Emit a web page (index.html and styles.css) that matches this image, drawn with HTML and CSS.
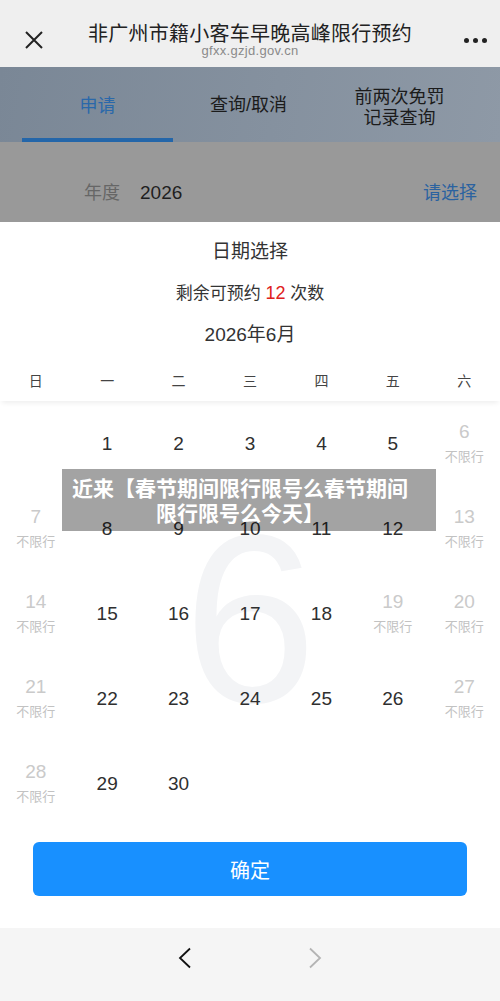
FILE: index.html
```html
<!DOCTYPE html>
<html lang="zh-CN">
<head>
<meta charset="utf-8">
<title>非广州市籍小客车早晚高峰限行预约</title>
<link rel="stylesheet" href="styles.css">
</head>
<body>
<div class="page">
  <header class="topbar">
    <div class="close">
      <svg width="18" height="18" viewBox="0 0 18 18"><path d="M1 1L17 17M17 1L1 17" stroke="#222" stroke-width="2" fill="none"/></svg>
    </div>
    <div class="title-block">
      <div class="title">非广州市籍小客车早晚高峰限行预约</div>
      <div class="subtitle">gfxx.gzjd.gov.cn</div>
    </div>
    <div class="more"><span></span><span></span><span></span></div>
  </header>

  <main class="content">
    <nav class="tabs">
      <div class="tab active">申请</div>
      <div class="tab">查询/取消</div>
      <div class="tab two">前两次免罚<br>记录查询</div>
    </nav>
    <div class="year-row">
      <span class="label">年度</span>
      <span class="value">2026</span>
      <span class="pick">请选择</span>
    </div>

    <section class="sheet">
      <div class="sheet-title">日期选择</div>
      <div class="remain">剩余可预约 <em>12</em> 次数</div>
      <div class="month">2026年6月</div>
      <div class="weekdays">
        <span>日</span><span>一</span><span>二</span><span>三</span><span>四</span><span>五</span><span>六</span>
      </div>
      <div class="cal">
        <div class="watermark">6</div>
        <div class="grid">
          <div class="day"></div>
          <div class="day">1</div>
          <div class="day">2</div>
          <div class="day">3</div>
          <div class="day">4</div>
          <div class="day">5</div>
          <div class="day off"><b>6</b><i>不限行</i></div>
          <div class="day off"><b>7</b><i>不限行</i></div>
          <div class="day">8</div>
          <div class="day">9</div>
          <div class="day">10</div>
          <div class="day">11</div>
          <div class="day">12</div>
          <div class="day off"><b>13</b><i>不限行</i></div>
          <div class="day off"><b>14</b><i>不限行</i></div>
          <div class="day">15</div>
          <div class="day">16</div>
          <div class="day">17</div>
          <div class="day">18</div>
          <div class="day off"><b>19</b><i>不限行</i></div>
          <div class="day off"><b>20</b><i>不限行</i></div>
          <div class="day off"><b>21</b><i>不限行</i></div>
          <div class="day">22</div>
          <div class="day">23</div>
          <div class="day">24</div>
          <div class="day">25</div>
          <div class="day">26</div>
          <div class="day off"><b>27</b><i>不限行</i></div>
          <div class="day off"><b>28</b><i>不限行</i></div>
          <div class="day">29</div>
          <div class="day">30</div>
        </div>
      </div>
      <div class="btn-wrap"><button class="confirm">确定</button></div>
    </section>

    <div class="banner">近来【春节期间限行限号么春节期间限行限号么今天】</div>
  </main>

  <footer class="browser-nav">
    <svg class="nav-back" width="16" height="22" viewBox="0 0 16 22"><path d="M13 1.5L3 11L13 20.5" stroke="#111" stroke-width="1.8" fill="none"/></svg>
    <svg class="nav-fwd" width="16" height="22" viewBox="0 0 16 22"><path d="M3 1.5L13 11L3 20.5" stroke="#b4b4b4" stroke-width="1.8" fill="none"/></svg>
  </footer>
</div>
</body>
</html>
```

FILE: styles.css
```css
* { box-sizing: border-box; margin: 0; padding: 0; }
html, body { width: 500px; height: 1001px; overflow: hidden; }
body {
  font-family: "Liberation Sans", "Noto Sans CJK SC", sans-serif;
  color: #333;
  background: #fff;
}
.page { display: flex; flex-direction: column; height: 1001px; }

/* header */
.topbar {
  height: 67px;
  background: #efefef;
  display: grid;
  grid-template-columns: 70px 1fr 70px;
  align-items: center;
}
.close { display: flex; justify-content: center; padding-top: 12px; margin-left: -1px; }
.close svg { margin-right: 2px; }
.title-block { align-self: start; text-align: center; padding-top: 22px; }
.title { font-size: 20px; line-height: 24px; color: #222; letter-spacing: 0.25px; }
.subtitle { font-size: 13px; line-height: 16px; color: #8a8a8a; letter-spacing: 0.3px; margin-top: -3px; }
.more { display: flex; gap: 4px; justify-content: center; padding-top: 14px; padding-left: 20px; }
.more span { width: 5px; height: 5px; border-radius: 50%; background: #222; }

/* content */
.content { flex: 1; display: flex; flex-direction: column; position: relative; }
.tabs {
  height: 75px;
  display: grid;
  grid-template-columns: repeat(3, 1fr);
  padding: 0 25px 0 22px;
  background: linear-gradient(100deg, #7a8796 0%, #85919f 55%, #8e99a6 100%);
}
.tab {
  display: flex; align-items: center; justify-content: center;
  font-size: 18px; line-height: 21px; color: #1b1b1b; text-align: center;
  padding-top: 2px;
}
.tab.active { color: #2a68aa; border-bottom: 4px solid #2466a9; padding-top: 8px; }
.tab.two { padding-top: 6px; }

.year-row {
  height: 80px;
  background: #999;
  display: flex;
  align-items: flex-start;
  padding: 39px 23px 0 84px;
  font-size: 18px;
  line-height: 24px;
}
.year-row .label { color: #666; }
.year-row .value { color: #1f1f1f; margin-left: 20px; font-size: 19px; }
.year-row .pick { color: #2b62a0; margin-left: auto; }

/* sheet */
.sheet {
  flex: 1;
  background: #fff;
  border-radius: 16px 16px 0 0;
  display: flex;
  flex-direction: column;
}
.sheet-title { text-align: center; font-size: 19px; line-height: 24px; margin-top: 18px; color: #333; }
.remain { text-align: center; font-size: 17px; line-height: 22px; margin-top: 18px; color: #333; }
.remain em { font-style: normal; color: #e02020; font-size: 18px; }
.month { text-align: center; font-size: 19px; line-height: 22px; margin-top: 19px; color: #333; }
.weekdays {
  display: grid; grid-template-columns: repeat(7, 1fr);
  height: 55px; padding-top: 25px;
  font-size: 14px; line-height: 20px; color: #444; text-align: center;
  box-shadow: 0 4px 5px -2px rgba(0,0,0,0.07);
  position: relative; z-index: 1;
}

.cal { position: relative; }
.watermark {
  position: absolute; inset: 0;
  display: flex; align-items: center; justify-content: center;
  font-family: "Liberation Sans", sans-serif;
  font-size: 240px; line-height: 1; color: #f3f4f6;
  padding-top: 10px;
}
.grid { position: relative; display: grid; grid-template-columns: repeat(7, 1fr); grid-auto-rows: 85px; }
.day {
  display: flex; flex-direction: column; align-items: center; justify-content: center;
  font-size: 19px; line-height: 22px; color: #2f2f2f;
}
.day b { font-weight: normal; color: #cacaca; }
.day i { font-style: normal; font-size: 13px; line-height: 18px; margin-top: 5px; color: #c2c2c2; }

.btn-wrap { padding: 16px 33px 0; }
.confirm {
  width: 100%; height: 54px; border: 0; border-radius: 6px;
  background: #1890ff; color: #fff;
  font-family: "Noto Sans CJK SC", sans-serif; font-size: 20px;
}

.banner {
  position: absolute; left: 62px; top: 402px;
  width: 374px; padding: 6px 28px 6px 10px;
  background: rgba(0,0,0,0.36);
  color: #fff; font-weight: bold;
  font-family: "Noto Sans CJK SC", sans-serif;
  font-size: 21px; line-height: 25px; text-align: center;
  z-index: 3;
}

/* browser nav */
.browser-nav {
  height: 73px;
  background: #f5f5f5;
  display: flex; justify-content: center; align-items: flex-start;
  gap: 114px; padding-top: 19px; padding-right: 1px;
}
```
